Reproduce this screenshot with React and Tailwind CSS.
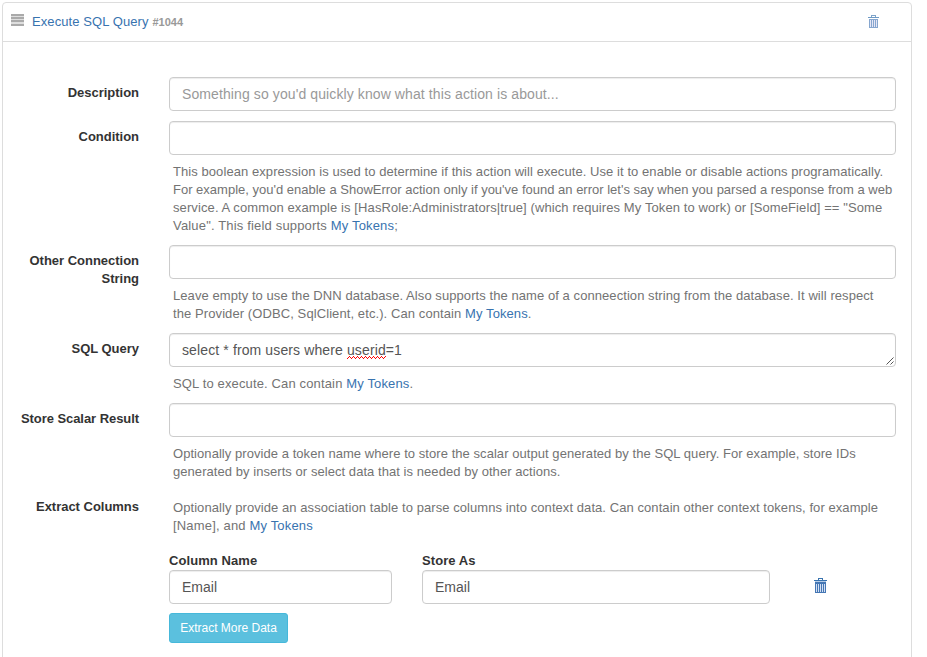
import React from "react";

const Input = ({ className = "", ...props }) => (
  <input
    className={`block h-[34px] rounded-[4px] border border-[#ccc] bg-white px-3 text-[14px] text-[#555] shadow-[inset_0_1px_1px_rgba(0,0,0,0.075)] outline-none placeholder:text-[#999] ${className}`}
    {...props}
  />
);

const Row = ({ label, labelClass = "tracking-[-0.02px]", children }) => (
  <div className="mb-[10px] flex">
    <div className={`w-[136px] shrink-0 pt-[7px] text-right text-[13px] leading-[18px] font-bold text-[#333] ${labelClass}`}>
      {label}
    </div>
    <div className="ml-[30px] w-[727px]">{children}</div>
  </div>
);

const Help = ({ children }) => (
  <div className="mt-[8px] pl-1 text-[13px] leading-[18px] whitespace-nowrap text-[#737373]">{children}</div>
);

const Line = ({ className = "tracking-[0.07px]", children }) => (
  <div className={className}>{children}</div>
);

const Token = () => <a className="text-[#3873af]">My Tokens</a>;

const Trash = ({ className }) => (
  <svg className={className} width="13" height="15" viewBox="0 0 13 15" fill="none" shapeRendering="crispEdges">
    <path d="M4 0h5v2h-1v-1h-3v1h-1z" fill="#3873af" />
    <path d="M0 2h13v1h-13z" fill="#3873af" />
    <path d="M1 3h11v1h-11z" fill="#b5cbe6" />
    <path d="M1 4h11v11h-11z" fill="#4577b4" />
    <path d="M2 6h1v8h-1zM4 6h1v8h-1zM6 6h1v8h-1zM8 6h1v8h-1zM10 6h1v8h-1z" fill="#d3dff3" />
  </svg>
);

const SmallTrash = ({ className }) => (
  <svg className={className} width="11" height="13" viewBox="0 0 11 13" fill="none" shapeRendering="crispEdges">
    <path d="M3 0h5v2h-1v-1h-3v1h-1z" fill="#7ea3c9" />
    <path d="M0 2h11v1h-11z" fill="#6f9ac5" />
    <path d="M1 4h9v9h-9z" fill="#86a6cf" />
    <path d="M2 5h1v7h-1zM4 5h1v7h-1zM6 5h1v7h-1zM8 5h1v7h-1z" fill="#e6e6f5" />
  </svg>
);

export default function App() {
  return (
    <div className="h-[657px] overflow-hidden bg-white pt-[2px] pl-[2px] font-['Liberation_Sans',Arial,sans-serif]">
      <div className="h-[700px] w-[910px] rounded-[4px] border border-[#ddd]">
        <header className="flex h-[39px] items-center border-b border-[#ddd] pl-2">
          <svg width="13" height="12" viewBox="0 0 13 12" shapeRendering="crispEdges" className="-mt-[5px]">
            <path d="M0 0h13v12H0z" fill="#dedede" />
            <path d="M0 0h13v2H0zM0 3h13v2H0zM0 6h13v2H0zM0 10h13v2H0z" fill="#aaa" />
          </svg>
          <a className="ml-2 text-[13px] tracking-[0.08px] text-[#3873af]">Execute SQL Query</a>
          <span className="ml-1 text-[11px] font-bold text-[#999]">#1044</span>
          <SmallTrash className="-mt-[1px] mr-[32px] ml-auto" />
        </header>

        <main className="pt-[35px]">
          <Row label="Description">
            <Input className="w-full tracking-[0.1px]" placeholder="Something so you'd quickly know what this action is about..." />
          </Row>
          <Row label="Condition">
            <Input className="w-full" />
            <Help>
              <Line>This boolean expression is used to determine if this action will execute. Use it to enable or disable actions programatically.</Line>
              <Line className="tracking-[0px]">For example, you'd enable a ShowError action only if you've found an error let's say when you parsed a response from a web</Line>
              <Line className="tracking-[0.1px]">service. A common example is [HasRole:Administrators|true] (which requires My Token to work) or [SomeField] == "Some</Line>
              <Line className="tracking-[0.17px]">Value". This field supports <Token />;</Line>
            </Help>
          </Row>
          <Row label={<>Other Connection<br />String</>}>
            <Input className="w-full" />
            <Help>
              <Line>Leave empty to use the DNN database. Also supports the name of a conneection string from the database. It will respect</Line>
              <Line className="tracking-[0.09px]">the Provider (ODBC, SqlClient, etc.). Can contain <Token />.</Line>
            </Help>
          </Row>
          <Row label="SQL Query">
            <div className="relative h-[34px] rounded-[4px] border border-[#ccc] px-3 text-[14px] leading-[32px] text-[#555] shadow-[inset_0_1px_1px_rgba(0,0,0,0.075)]">
              <span className="tracking-[0.12px]">
                select * from users where{" "}
                <span className="relative inline-block">
                  userid
                  <svg className="absolute bottom-[7px] left-0" width="39" height="3" shapeRendering="crispEdges">
                    <defs>
                      <pattern id="squiggle" width="4" height="3" patternUnits="userSpaceOnUse">
                        <path d="M0 2h1v1h-1zM1 1h1v1h-1zM2 0h1v1h-1zM3 1h1v1h-1z" fill="#f00" />
                      </pattern>
                    </defs>
                    <rect width="39" height="3" fill="url(#squiggle)" />
                  </svg>
                </span>
                =1
              </span>
              <svg className="absolute right-[1px] bottom-[1px]" width="8" height="8" viewBox="0 0 8 8">
                <path d="M0.5 7.5l7-7M4.5 7.5l3-3" stroke="#555" fill="none" />
              </svg>
            </div>
            <Help>
              <Line className="tracking-[0.14px]">SQL to execute. Can contain <Token />.</Line>
            </Help>
          </Row>
          <Row label="Store Scalar Result" labelClass="tracking-[-0.06px]">
            <Input className="w-full" />
            <Help>
              <Line className="tracking-[0.055px]">Optionally provide a token name where to store the scalar output generated by the SQL query. For example, store IDs</Line>
              <Line className="tracking-[0.055px]">generated by inserts or select data that is needed by other actions.</Line>
            </Help>
          </Row>
          <Row label="Extract Columns">
            <Help>
              <Line>Optionally provide an association table to parse columns into context data. Can contain other context tokens, for example</Line>
              <Line className="tracking-[0.17px]">[Name], and <Token /></Line>
            </Help>
            <div className="mt-[17px] flex text-[13px] leading-[18px] font-bold tracking-[0.08px] text-[#333]">
              <div className="w-[253px]">Column Name</div>
              <div>Store As</div>
            </div>
            <div className="flex items-center">
              <Input className="w-[223px]" defaultValue="Email" />
              <Input className="ml-[30px] w-[348px]" defaultValue="Email" />
              <Trash className="mb-[3px] ml-[44px]" />
            </div>
            <button className="mt-[9px] h-[30px] w-[119px] rounded-[3px] border border-[#46b8da] bg-[#5bc0de] text-[12px] whitespace-nowrap text-white">
              Extract More Data
            </button>
          </Row>
        </main>
      </div>
    </div>
  );
}
